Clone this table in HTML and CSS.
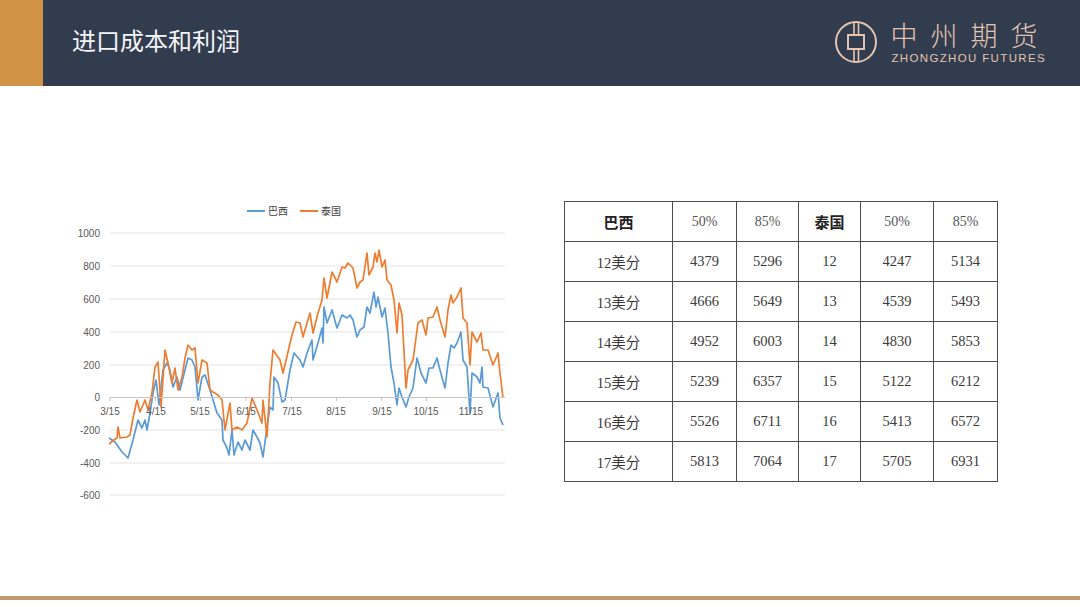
FILE: index.html
```html
<!DOCTYPE html>
<html lang="zh">
<head>
<meta charset="utf-8">
<title>进口成本和利润</title>
<link rel="stylesheet" href="styles.css">
</head>
<body>
<div class="slide">
  <header class="header">
    <div class="accent"></div>
    <h1 class="title">进口成本和利润</h1>
    <div class="logo">
      <svg class="logo-mark" width="46" height="46" viewBox="832 17 46 46">
        <circle cx="855" cy="40" r="20" fill="none" stroke="#e4c4b0" stroke-width="2"/>
        <rect x="847" y="33" width="16" height="14" fill="none" stroke="#e4c4b0" stroke-width="2"/>
        <line x1="853" y1="21" x2="853" y2="33" stroke="#e4c4b0" stroke-width="1.6"/>
        <line x1="857.5" y1="21" x2="857.5" y2="33" stroke="#e4c4b0" stroke-width="1.6"/>
        <line x1="853" y1="47" x2="853" y2="59" stroke="#e4c4b0" stroke-width="1.6"/>
        <line x1="857.5" y1="47" x2="857.5" y2="59" stroke="#e4c4b0" stroke-width="1.6"/>
      </svg>
      <div class="logo-text">
        <div class="logo-cn">中州期货</div>
        <div class="logo-en">ZHONGZHOU FUTURES</div>
      </div>
    </div>
  </header>

  <main class="content">
    <svg class="chart" width="445" height="310" viewBox="70 195 445 310">
      <g class="legend">
        <line x1="247" y1="211" x2="265" y2="211" stroke="#5b9bd5" stroke-width="2"/>
        <text x="268" y="214.5">巴西</text>
        <line x1="300" y1="211" x2="318" y2="211" stroke="#ed7d31" stroke-width="2"/>
        <text x="321" y="214.5">泰国</text>
      </g>
      <g class="grid">
        <line x1="110" y1="233" x2="505" y2="233"/>
        <line x1="110" y1="266" x2="505" y2="266"/>
        <line x1="110" y1="299" x2="505" y2="299"/>
        <line x1="110" y1="332" x2="505" y2="332"/>
        <line x1="110" y1="365" x2="505" y2="365"/>
        <line x1="110" y1="430" x2="505" y2="430"/>
        <line x1="110" y1="463" x2="505" y2="463"/>
        <line x1="110" y1="495" x2="505" y2="495"/>
      </g>
      <g class="ylabels">
        <text x="100" y="236.5">1000</text>
        <text x="100" y="269.5">800</text>
        <text x="100" y="302.5">600</text>
        <text x="100" y="335.5">400</text>
        <text x="100" y="368.5">200</text>
        <text x="100" y="400.5">0</text>
        <text x="100" y="433.5">-200</text>
        <text x="100" y="466.5">-400</text>
        <text x="100" y="498.5">-600</text>
      </g>
      <polyline class="s-br" points="109,438 115,442 122,452 128,458 133,440 138,420 142,428 145,420 147,430 150,413 153,393 156,380 159,405 163,370 167,363 170,370 173,387 177,377 180,390 185,370 188,358 192,360 195,367 198,400 202,377 205,375 210,390 217,413 222,420 223,440 227,448 229,455 232,430 234,455 238,442 242,450 245,440 250,450 253,430 257,437 260,443 263,457 267,427 270,407 273,410 274,377 278,383 282,402 285,400 290,370 294,353 300,360 303,367 307,353 312,340 313,360 318,343 322,328 323,343 324,307 327,323 332,310 337,328 342,315 347,318 350,315 353,320 357,337 360,330 364,327 367,307 370,313 374,292 376,307 378,297 382,317 385,308 388,333 391,367 394,383 397,405 399,388 402,397 406,407 409,397 413,388 417,358 421,373 426,383 429,368 433,368 437,358 440,370 445,388 448,363 451,345 454,348 457,343 461,332 463,360 467,367 470,413 472,373 477,377 480,383 482,367 483,387 488,388 493,407 498,393 500,418 503,425"/>
      <polyline class="s-th" points="109,444 114,440 117,438 118,427 120,438 127,437 130,435 133,418 137,400 140,412 145,400 148,410 152,393 155,367 158,362 161,407 165,350 168,363 172,383 175,368 178,390 182,377 185,358 188,345 192,350 195,348 198,383 202,360 207,363 210,390 213,392 218,395 222,400 225,430 230,403 232,430 237,427 242,430 247,423 252,398 257,410 262,423 263,400 267,437 270,383 273,350 280,360 283,373 288,352 292,335 296,322 300,323 303,337 307,323 310,313 313,333 318,313 322,300 324,278 327,298 332,272 337,282 342,267 345,268 348,263 353,268 357,288 360,282 363,280 367,253 369,275 373,267 375,253 377,262 379,250 382,267 385,260 387,280 391,285 394,300 397,333 399,303 402,315 406,388 408,370 413,360 418,323 422,320 426,335 428,318 433,317 437,307 440,320 445,337 448,310 451,295 453,303 457,297 461,288 463,318 467,323 470,365 472,332 477,342 481,333 483,350 488,350 493,365 498,353 500,373 503,398"/>
      <g class="axis">
        <line x1="110" y1="397.5" x2="505" y2="397.5"/>
        <line x1="110" y1="397.5" x2="110" y2="401"/>
        <line x1="155.5" y1="397.5" x2="155.5" y2="401"/>
        <line x1="200.5" y1="397.5" x2="200.5" y2="401"/>
        <line x1="246" y1="397.5" x2="246" y2="401"/>
        <line x1="291.5" y1="397.5" x2="291.5" y2="401"/>
        <line x1="336.5" y1="397.5" x2="336.5" y2="401"/>
        <line x1="381.5" y1="397.5" x2="381.5" y2="401"/>
        <line x1="426.5" y1="397.5" x2="426.5" y2="401"/>
        <line x1="471.5" y1="397.5" x2="471.5" y2="401"/>
      </g>
      <g class="xlabels">
        <text x="110" y="415">3/15</text>
        <text x="156" y="415">4/15</text>
        <text x="200" y="415">5/15</text>
        <text x="246" y="415">6/15</text>
        <text x="292" y="415">7/15</text>
        <text x="336" y="415">8/15</text>
        <text x="382" y="415">9/15</text>
        <text x="426" y="415">10/15</text>
        <text x="471" y="415">11/15</text>
      </g>
    </svg>

    <table class="cost-table">
      <colgroup>
        <col class="c1"><col class="c2"><col class="c3"><col class="c4"><col class="c5"><col class="c6">
      </colgroup>
      <tr class="head">
        <th>巴西</th><td>50%</td><td>85%</td><th>泰国</th><td>50%</td><td>85%</td>
      </tr>
      <tr><td>12美分</td><td>4379</td><td>5296</td><td>12</td><td>4247</td><td>5134</td></tr>
      <tr><td>13美分</td><td>4666</td><td>5649</td><td>13</td><td>4539</td><td>5493</td></tr>
      <tr><td>14美分</td><td>4952</td><td>6003</td><td>14</td><td>4830</td><td>5853</td></tr>
      <tr><td>15美分</td><td>5239</td><td>6357</td><td>15</td><td>5122</td><td>6212</td></tr>
      <tr><td>16美分</td><td>5526</td><td>6711</td><td>16</td><td>5413</td><td>6572</td></tr>
      <tr><td>17美分</td><td>5813</td><td>7064</td><td>17</td><td>5705</td><td>6931</td></tr>
    </table>
  </main>

  <footer class="footer"><div class="rule"></div></footer>
</div>
</body>
</html>
```

FILE: styles.css
```css
* { box-sizing: border-box; }
html, body {
  margin: 0;
  padding: 0;
  background: #ffffff;
}
.slide {
  width: 1080px;
  height: 607px;
  display: flex;
  flex-direction: column;
  overflow: hidden;
  font-family: "Liberation Sans", "Noto Sans CJK SC", sans-serif;
}
.header {
  height: 86px;
  flex: none;
  display: flex;
  align-items: center;
  background: #323c4f;
}
.accent {
  width: 43px;
  height: 86px;
  background: #d19346;
  flex: none;
}
.title {
  flex: 1;
  margin: 0 0 0 29px;
  font-family: "Noto Sans CJK SC", sans-serif;
  font-weight: 400;
  font-size: 24px;
  line-height: 1;
  color: #f4f5f7;
  padding-bottom: 7px;
}
.logo {
  display: flex;
  align-items: center;
  margin-right: 34px;
  padding-bottom: 2px;
}
.logo-mark {
  display: block;
  margin-right: 12px;
}
.logo-text {
  display: flex;
  flex-direction: column;
  color: #e4c4b0;
}
.logo-cn {
  font-family: "Noto Sans CJK SC", sans-serif;
  font-weight: 300;
  font-size: 27px;
  line-height: 27px;
  letter-spacing: 13px;
  margin-right: -13px;
  margin-left: -1px;
}
.logo-en {
  font-family: "Liberation Sans", sans-serif;
  font-size: 11.5px;
  line-height: 12px;
  letter-spacing: 1.35px;
  margin-top: 4px;
}
.content {
  flex: 1;
  display: flex;
  align-items: flex-start;
}
.chart {
  display: block;
  flex: none;
  margin-left: 70px;
  margin-top: 109px;
}
.chart text {
  font-family: "Liberation Sans", "Noto Sans CJK SC", sans-serif;
  font-size: 10px;
  fill: #595959;
}
.legend text { text-anchor: start; fill: #404040; font-size: 10px; }
.ylabels text { text-anchor: end; }
.xlabels text { text-anchor: middle; }
.grid line { stroke: #e3e3e3; stroke-width: 1; }
.axis line { stroke: #c4c4c4; stroke-width: 1; }
.s-br, .s-th {
  fill: none;
  stroke-width: 1.7;
  stroke-linejoin: round;
}
.s-br { stroke: #5b9bd5; }
.s-th { stroke: #ed7d31; }

.cost-table {
  flex: none;
  margin-left: 49px;
  margin-top: 115px;
  border-collapse: collapse;
  table-layout: fixed;
  width: 433px;
  font-family: "Liberation Serif", "Noto Sans CJK SC", serif;
  font-size: 14.5px;
  color: #3a3a3a;
}
.c1 { width: 108px; }
.c2 { width: 64px; }
.c3 { width: 62px; }
.c4 { width: 62px; }
.c5 { width: 73px; }
.c6 { width: 64px; }
.cost-table td, .cost-table th {
  border: 1px solid #4d4d4d;
  height: 40px;
  padding: 0;
  text-align: center;
  vertical-align: middle;
}
.cost-table th {
  font-family: "Noto Sans CJK SC", serif;
  font-weight: 700;
  font-size: 15px;
  color: #222;
}
.cost-table td {
  font-weight: 400;
}
.cost-table .head td { color: #555; font-size: 14px; }

.footer {
  height: 11px;
  flex: none;
}
.rule {
  height: 4px;
  background: #c29968;
}
```
